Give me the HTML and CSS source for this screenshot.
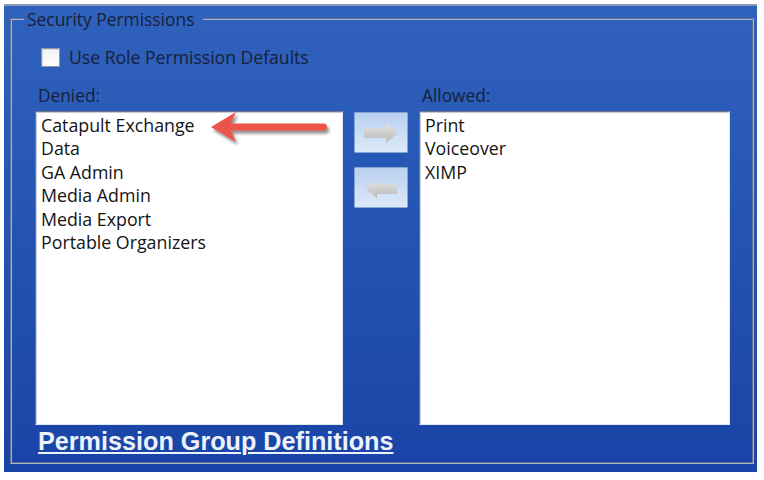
FILE: index.html
```html
<!DOCTYPE html>
<html lang="en">

<head>
    <meta charset="UTF-8">
    <title>Security Permissions</title>
    <link rel="stylesheet" href="styles.css">
</head>

<body>
    <div class="window">
        <fieldset class="group">
            <legend>Security Permissions</legend>
            <label class="check-row">
                <span class="check-box"></span>
                Use Role Permission Defaults
            </label>
            <div class="lists">
                <div class="list-col">
                    <div class="list-label">Denied:</div>
                    <ul class="list-box denied">
                        <li>Catapult Exchange</li>
                        <li>Data</li>
                        <li>GA Admin</li>
                        <li>Media Admin</li>
                        <li>Media Export</li>
                        <li>Portable Organizers</li>
                    </ul>
                </div>
                <div class="move-buttons">
                    <button class="move-button">
                        <svg width="40" height="22" viewBox="0 0 40 22">
                            <defs>
                                <linearGradient id="arrowFill" x1="0" y1="0" x2="0" y2="1">
                                    <stop offset="0" stop-color="#e4e4e4" />
                                    <stop offset="1" stop-color="#b9b9b9" />
                                </linearGradient>
                            </defs>
                            <path d="M3 6 H25 V1 L37 11 L25 21 V16 H3 Z" fill="url(#arrowFill)" />
                        </svg>
                    </button>
                    <button class="move-button">
                        <svg width="40" height="22" viewBox="0 0 40 22">
                            <path d="M36 7 H16 V3 L5 12 L16 21 V17 H36 Z" fill="url(#arrowFill)" />
                        </svg>
                    </button>
                </div>
                <div class="list-col allowed-col">
                    <div class="list-label">Allowed:</div>
                    <ul class="list-box">
                        <li>Print</li>
                        <li>Voiceover</li>
                        <li>XIMP</li>
                    </ul>
                </div>
            </div>
            <a class="group-link" href="#">Permission Group Definitions</a>
        </fieldset>

        <!-- callout pointing at the first denied item -->
        <svg class="callout" width="130" height="40" viewBox="0 0 130 40">
            <defs>
                <filter id="calloutShadow" x="-10%" y="-30%" width="130%" height="180%">
                    <feDropShadow dx="2" dy="3" stdDeviation="1.6" flood-color="#000" flood-opacity="0.45" />
                </filter>
            </defs>
            <path filter="url(#calloutShadow)" fill="#ec5248"
                d="M6 17 L31 2 L26 13.5 H118.5 a3.5 3.5 0 0 1 0 7 H26 L31 32 Z" />
        </svg>
    </div>
</body>

</html>
```

FILE: styles.css
```css
:root {
    --panel-top: #2f62bd;
    --panel-bottom: #1944a7;
    --ink: #17213a;
    --ui-font: "Open Sans", "Noto Sans", sans-serif;
}

body {
    margin: 0;
    background-color: #fff;
}

.window {
    position: relative;
    box-sizing: border-box;
    width: 753px;
    height: 468px;
    margin: 4px 0 0 4px;
    padding: 2px 3px 0 6px;
    background: linear-gradient(to bottom, var(--panel-top), var(--panel-bottom));
    border-top: 2px solid #8d9ab4;
    font-family: var(--ui-font);
    color: var(--ink);
}

.group {
    box-sizing: border-box;
    height: 456px;
    margin: 0;
    padding: 0 0 0 23px;
    border: 2px groove #a4b5d6;
}

.group legend {
    margin-left: -11px;
    padding: 0 9px 0 3px;
    font-size: 17.4px;
    line-height: 22px;
}

.check-row {
    display: flex;
    align-items: center;
    gap: 9px;
    margin: 16px 0 0 6px;
    font-size: 17.6px;
    line-height: 22px;
}

.check-box {
    width: 17px;
    height: 17px;
    background: linear-gradient(to bottom, #f2f2f2, #ffffff);
    border: 1px solid #8d96a6;
    box-shadow: inset 1px 1px 0 #d6d9de;
}

.lists {
    display: flex;
    gap: 11px;
    margin-top: 17px;
}

.list-col {
    display: flex;
    flex-direction: column;
    width: 308px;
}

.allowed-col {
    width: 311px;
}

.list-label {
    padding: 0 0 4px 3px;
    font-size: 17.3px;
    line-height: 22px;
}

.list-box {
    box-sizing: border-box;
    height: 314px;
    margin: 0;
    padding: 2px 5px;
    list-style: none;
    background-color: #fff;
    border: 1px solid;
    border-color: #6f7890 #e2e6ee #e2e6ee #6f7890;
    box-shadow: inset 1px 1px 0 #c7ccd6;
    font-size: 17.8px;
    line-height: 23.4px;
    color: #141414;
}

.move-buttons {
    display: flex;
    flex-direction: column;
    gap: 14px;
    padding-top: 27px;
}

.move-button {
    display: flex;
    align-items: center;
    justify-content: center;
    width: 54px;
    height: 41px;
    padding: 0;
    background: linear-gradient(to bottom, #b9d0f0, #dde9f9);
    border: 1px solid #86a6d6;
    border-radius: 1px;
}

.group-link {
    display: inline-block;
    margin: 2px 0 0 3px;
    font-family: "Liberation Sans", Arial, sans-serif;
    font-weight: bold;
    font-size: 25.2px;
    line-height: 28px;
    color: #eef2fa;
    text-decoration: underline;
    text-decoration-thickness: 2px;
    text-underline-offset: 2px;
}

.callout {
    position: absolute;
    left: 201px;
    top: 104px;
}
```
